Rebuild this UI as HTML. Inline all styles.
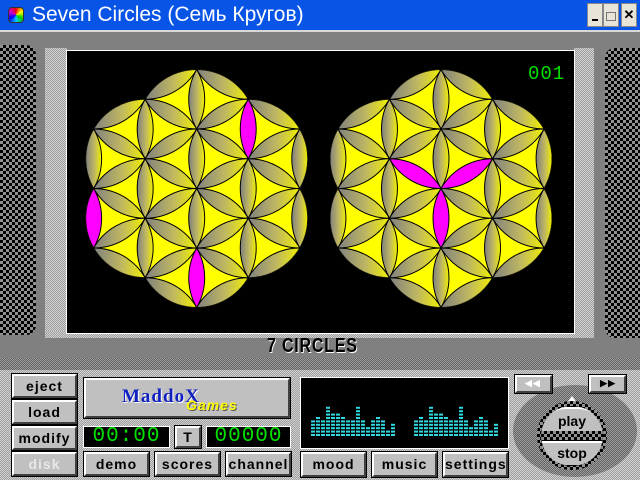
<!DOCTYPE html>
<html><head><meta charset="utf-8">
<style>
*{margin:0;padding:0;box-sizing:border-box}
body{width:640px;height:480px;overflow:hidden;background:#808080;position:relative;font-family:"Liberation Sans",sans-serif}
.abs{position:absolute}
.chk{background:repeating-conic-gradient(#000 0 25%,#909090 0 50%) 0 0/6px 6px}
.dith{background:repeating-conic-gradient(#a0a0a0 0 25%,#d0d0d0 0 50%) 0 0/2px 2px}
.dith2{background:repeating-conic-gradient(#606060 0 25%,#a0a0a0 0 50%) 0 0/2px 2px}
.btn{position:absolute;background:#c0c0c0;border:2px solid;border-color:#fff #404040 #404040 #fff;outline:1px solid #000;font-weight:bold;font-size:14px;text-align:center;color:#000;letter-spacing:1px}
.lcd{position:absolute;background:#000;border:1px solid #fff;color:#00e000;font-family:"Liberation Mono",monospace;font-size:21px;text-align:center;line-height:20px;letter-spacing:1px}
</style></head><body>
<div class="abs" style="left:0;top:0;width:640px;height:30px;background:#0854e6"></div>
<div class="abs" style="left:8px;top:7px;width:16px;height:16px;border-radius:4px;background:conic-gradient(#e00,#ff0,#0c0,#0cf,#00f,#c0c,#e00);border:1px solid #333"></div>
<div class="abs" style="left:32px;top:3px;color:#fff;font-size:21px;line-height:24px">Seven Circles (Семь Кругов)</div>
<div class="abs" style="left:587px;top:3px;width:16px;height:24px;background:#e8e4d8;border:1px solid #888"><div class="abs" style="left:4px;top:15px;width:6px;height:2px;background:#000"></div></div>
<div class="abs" style="left:603px;top:3px;width:16px;height:24px;background:#e8e4d8;border:1px solid #888"><div class="abs" style="left:2px;top:8px;width:10px;height:9px;border:1px solid #777"></div></div>
<div class="abs" style="left:621px;top:3px;width:16px;height:24px;background:#e8e4d8;border:1px solid #888;font-weight:bold;font-size:13px;text-align:center;line-height:22px">✕</div>
<div class="abs" style="left:0;top:30px;width:640px;height:2px;background:#d8d8d8"></div>
<div class="abs chk" style="left:0;top:45px;width:36px;height:290px;border-top-right-radius:10px;border-bottom-right-radius:10px"></div>
<div class="abs chk" style="left:605px;top:48px;width:35px;height:290px;border-top-left-radius:10px;border-bottom-left-radius:10px"></div>
<div class="abs dith" style="left:45px;top:48px;width:22px;height:290px"></div>
<div class="abs dith" style="left:574px;top:48px;width:20px;height:290px"></div>
<div class="abs dith" style="left:45px;top:331px;width:549px;height:7px"></div>
<div class="abs" style="left:66px;top:50px;width:509px;height:284px;background:#000;border:1px solid #fff"></div>
<div class="abs" style="left:528px;top:63px;color:#00e000;font-family:'Liberation Mono',monospace;font-size:19px;letter-spacing:1px">001</div>
<svg class="abs" id="fl" style="left:0;top:0" width="640" height="480"></svg>
<div class="abs" style="left:267px;top:335px;font-size:20px;font-weight:bold;color:#000;text-shadow:1px 1px 0 #fff;letter-spacing:1px;transform:scaleX(.8);transform-origin:left">7 CIRCLES</div>
<div class="abs dith2" style="left:0;top:358px;width:640px;height:12px"></div>
<div class="abs dith" style="left:0;top:370px;width:640px;height:110px"></div>
<div class="btn" style="left:12px;top:374px;width:65px;height:24px;line-height:20px">eject</div>
<div class="btn" style="left:12px;top:400px;width:65px;height:24px;line-height:20px">load</div>
<div class="btn" style="left:12px;top:426px;width:65px;height:24px;line-height:20px">modify</div>
<div class="btn" style="left:12px;top:452px;width:65px;height:24px;line-height:20px;color:#e8e8e8">disk</div>
<div class="btn" style="left:84px;top:378px;width:206px;height:40px"><span style="position:absolute;left:36px;top:6px;font-family:'Liberation Serif',serif;font-size:19px;font-weight:bold;color:#1020c0;text-shadow:1px 1px 0 #fff">MaddoX</span><span style="position:absolute;left:100px;top:17px;font-style:italic;font-size:14px;color:#ff0;text-shadow:1px 1px 0 #555">Games</span></div>
<div class="lcd" style="left:83px;top:426px;width:87px;height:22px">00:00</div>
<div class="btn" style="left:175px;top:426px;width:26px;height:22px;line-height:18px">T</div>
<div class="lcd" style="left:206px;top:426px;width:85px;height:22px">00000</div>
<div class="btn" style="left:84px;top:452px;width:65px;height:24px;line-height:20px">demo</div>
<div class="btn" style="left:155px;top:452px;width:65px;height:24px;line-height:20px">scores</div>
<div class="btn" style="left:226px;top:452px;width:65px;height:24px;line-height:20px">channel</div>
<div class="abs" style="left:300px;top:377px;width:209px;height:72px;background:#000;border:1px solid #fff"></div>
<svg class="abs" id="viz" style="left:0;top:0" width="640" height="480"></svg>
<div class="btn" style="left:301px;top:452px;width:65px;height:25px;line-height:21px">mood</div>
<div class="btn" style="left:372px;top:452px;width:65px;height:25px;line-height:21px">music</div>
<div class="btn" style="left:443px;top:452px;width:65px;height:25px;line-height:21px">settings</div>
<div class="abs dith2" style="left:513px;top:385px;width:124px;height:92px;border-radius:50%"></div>
<div class="btn" style="left:515px;top:375px;width:37px;height:18px;font-size:9px;line-height:13px;color:#fff;text-align:left;padding-left:8px">◀◀</div>
<div class="btn" style="left:589px;top:375px;width:37px;height:18px;font-size:9px;line-height:13px;text-align:right;padding-right:8px">▶▶</div>
<div class="abs" style="left:566px;top:396px;width:0;height:0;border-left:6px solid transparent;border-right:6px solid transparent;border-bottom:8px solid #fff"></div>
<div class="abs chk" style="left:537px;top:401px;width:70px;height:69px;border-radius:50%"></div>
<div class="abs" style="left:541px;top:406px;width:62px;height:60px;border-radius:50%;overflow:hidden;background:#000">
<div class="abs" style="left:1px;top:1px;width:60px;height:24px;border-radius:30px 30px 0 0;background:#c0c0c0;border-top:2px solid #fff;font-weight:bold;font-size:14px;text-align:center;line-height:24px">play</div>
<div class="abs chk" style="left:0;top:25px;width:62px;height:9px"></div>
<div class="abs" style="left:1px;top:35px;width:60px;height:24px;border-radius:0 0 30px 30px;background:#c0c0c0;border-top:2px solid #fff;font-weight:bold;font-size:14px;text-align:center;line-height:20px">stop</div>
</div>
<script>
var s=document.getElementById('fl');
var h='<defs><linearGradient id="pg" x1="0" y1="0" x2="1" y2="0"><stop offset="0" stop-color="#808080"/><stop offset=".55" stop-color="#c0b860"/><stop offset="1" stop-color="#f0f000"/></linearGradient>';
var r=59.5,cx30=r*Math.cos(Math.PI/6);
function flower(cx,cy,id,mag){
 var cp='<clipPath id="'+id+'">';
 for(var k=0;k<6;k++){var a=(30+60*k)*Math.PI/180;cp+='<circle cx="'+(cx+r*Math.cos(a))+'" cy="'+(cy+r*Math.sin(a))+'" r="'+r+'"/>';}
 cp+='</clipPath>';
 var g='<g clip-path="url(#'+id+')">';
 for(var k=0;k<6;k++){var a=(30+60*k)*Math.PI/180;g+='<circle cx="'+(cx+r*Math.cos(a))+'" cy="'+(cy+r*Math.sin(a))+'" r="'+r+'" fill="#ffff00"/>';}
 var pts=[];
 for(var a=-4;a<=4;a++)for(var b=-4;b<=4;b++){var x=cx+b*cx30,y=cy+a*r+b*r/2;if(Math.hypot(x-cx,y-cy)<2.3*r)pts.push([x,y]);}
 var dirs=[[0,r],[cx30,r/2],[cx30,-r/2]];
 pts.forEach(function(p){dirs.forEach(function(d){var q=[p[0]+d[0],p[1]+d[1]];
  if(Math.hypot(q[0]-cx,q[1]-cy)>2.3*r)return;
  var mx=(p[0]+q[0])/2,my=(p[1]+q[1])/2,f='url(#pg)';
  mag.forEach(function(m){if(Math.hypot(mx-m[0],my-m[1])<8)f='#ff00ff';});
  g+='<path d="M'+p[0]+' '+p[1]+'A'+r+' '+r+' 0 0 1 '+q[0]+' '+q[1]+'A'+r+' '+r+' 0 0 1 '+p[0]+' '+p[1]+'Z" fill="'+f+'" stroke="#000" stroke-width="1"/>';
 });});
 g+='</g>';
 return [cp,g];
}
var L=flower(196.7,188.5,'c1',[[248,128],[95,218],[196.7,279]]);
var R=flower(441,188.5,'c2',[[441-cx30/2,188.5-r/4],[441+cx30/2,188.5-r/4],[441,218]]);
h+=L[0]+R[0]+'</defs>'+L[1]+R[1];
s.innerHTML=h;
var v=document.getElementById('viz');
var hs=[5,6,5,9,7,7,6,5,5,9,5,3,5,6,5,2,4];
var o='';
[311,414].forEach(function(x0){hs.forEach(function(n,i){for(var j=0;j<n;j++){o+='<rect x="'+(x0+i*5)+'" y="'+(434-j*3.4)+'" width="4" height="2" fill="#30d8e0"/>';}});});
v.innerHTML=o;
</script>
</body></html>
